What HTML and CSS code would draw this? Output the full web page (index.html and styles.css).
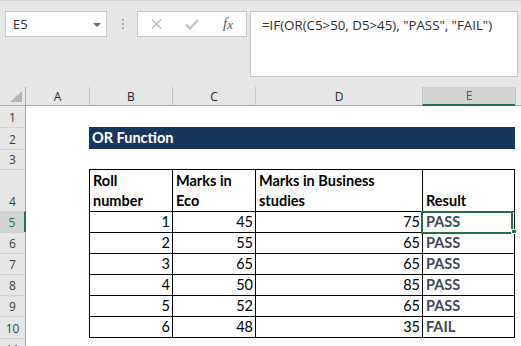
FILE: index.html
```html
<!DOCTYPE html>
<html lang="en">
<head>
<meta charset="utf-8">
<title>OR Function</title>
<link rel="stylesheet" href="styles.css">
</head>
<body>
<div class="app">
  <header class="toolbar">
    <div class="namebox">
      <span>E5</span>
      <svg class="nb-arrow" width="8" height="4" viewBox="0 0 8 4"><path d="M0 0H8L4 4Z" fill="#6a6a6a"/></svg>
    </div>
    <div class="grip"><i></i><i></i><i></i></div>
    <div class="fbuttons">
      <svg width="11" height="10" viewBox="0 0 11 10"><path d="M0.8 0.5L10.2 9.5M10.2 0.5L0.8 9.5" stroke="#b9b9b9" stroke-width="1.3" fill="none"/></svg>
      <svg width="14" height="11" viewBox="0 0 14 11"><path d="M1 5.5L5 9.5L13 1" stroke="#c2c2c2" stroke-width="2.2" fill="none"/></svg>
      <span class="fx">f<span class="fx-x">x</span></span>
    </div>
    <div class="formula">=IF(OR(C5&gt;50, D5&gt;45), "PASS", "FAIL")</div>
  </header>

  <main class="sheet">
    <div class="corner"><svg width="12" height="11" viewBox="0 0 12 11"><path d="M12 0V11H0Z" fill="#b5b5b5"/></svg></div>
    <div class="ch first">A</div>
    <div class="ch">B</div>
    <div class="ch">C</div>
    <div class="ch">D</div>
    <div class="ch active">E</div>
    <div class="ch"></div>

    <div class="rh top">1</div>
    <div class="c"></div><div class="c"></div><div class="c"></div><div class="c"></div><div class="c"></div><div class="c"></div>

    <div class="rh">2</div>
    <div class="c"></div>
    <div class="banner">OR Function</div>
    <div class="c"></div>

    <div class="rh">3</div>
    <div class="c"></div><div class="c"></div><div class="c"></div><div class="c"></div><div class="c"></div><div class="c"></div>

    <div class="rh">4</div>
    <div class="c"></div>
    <div class="t hd"><span>Roll<br>number</span></div>
    <div class="t hd"><span>Marks in<br>Eco</span></div>
    <div class="t hd"><span>Marks in Business<br>studies</span></div>
    <div class="t hd e"><span>Result</span></div>
    <div class="c"></div>

    <div class="rh active">5</div>
    <div class="c"></div>
    <div class="t num">1</div>
    <div class="t num">45</div>
    <div class="t num">75</div>
    <div class="t res e sel">PASS<div class="selbox"><i class="handle"></i></div></div>
    <div class="c"></div>

    <div class="rh">6</div>
    <div class="c"></div>
    <div class="t num">2</div>
    <div class="t num">55</div>
    <div class="t num">65</div>
    <div class="t res e">PASS</div>
    <div class="c"></div>

    <div class="rh">7</div>
    <div class="c"></div>
    <div class="t num">3</div>
    <div class="t num">65</div>
    <div class="t num">65</div>
    <div class="t res e">PASS</div>
    <div class="c"></div>

    <div class="rh">8</div>
    <div class="c"></div>
    <div class="t num">4</div>
    <div class="t num">50</div>
    <div class="t num">85</div>
    <div class="t res e">PASS</div>
    <div class="c"></div>

    <div class="rh">9</div>
    <div class="c"></div>
    <div class="t num">5</div>
    <div class="t num">52</div>
    <div class="t num">65</div>
    <div class="t res e">PASS</div>
    <div class="c"></div>

    <div class="rh">10</div>
    <div class="c"></div>
    <div class="t num last">6</div>
    <div class="t num last">48</div>
    <div class="t num last">35</div>
    <div class="t res e last">FAIL</div>
    <div class="c"></div>

    <div class="rh">11</div>
    <div class="c"></div><div class="c"></div><div class="c"></div><div class="c"></div><div class="c"></div><div class="c"></div>
  </main>
</div>
</body>
</html>
```

FILE: styles.css
```css
* { box-sizing: border-box; }

html, body {
  margin: 0;
  padding: 0;
}

body {
  width: 521px;
  height: 346px;
  overflow: hidden;
  background: #e6e6e6;
  font-family: "Open Sans", "Noto Sans", sans-serif;
}

.app {
  display: flex;
  flex-direction: column;
  height: 346px;
}

/* ---------- toolbar / formula bar ---------- */
.toolbar {
  height: 87px;
  flex: none;
  border-top: 1px solid #d6d6d6;
  display: flex;
  align-items: flex-start;
  padding: 10px 0 0 5px;
}

.namebox {
  width: 102px;
  height: 26px;
  background: #fff;
  border: 1px solid #c6c6c6;
  display: flex;
  align-items: center;
  justify-content: space-between;
  padding: 0 5px 0 7px;
  font-size: 13px;
  color: #333;
}

.nb-arrow { margin-top: 1px; }

.grip {
  width: 2px;
  margin: 8px 13px 0 15px;
  display: flex;
  flex-direction: column;
  gap: 2px;
}

.grip i {
  display: block;
  width: 2px;
  height: 2px;
  background: #a9a9a9;
}

.fbuttons {
  width: 110px;
  height: 26px;
  background: #fff;
  border: 1px solid #c6c6c6;
  display: grid;
  grid-template-columns: repeat(3, 36px);
  align-items: center;
  justify-items: center;
}

.fx {
  font-family: "Liberation Serif", "DejaVu Serif", serif;
  font-style: italic;
  font-size: 15px;
  color: #5a5a5a;
  line-height: 1;
  margin-top: -2px;
}

.fx-x {
  font-size: 13px;
  position: relative;
  top: 1px;
}

.formula {
  margin-left: 3px;
  width: 268px;
  height: 66px;
  background: #fff;
  border: 1px solid #c6c6c6;
  padding: 4px 8px 0 11px;
  font-size: 13.3px;
  line-height: 18px;
  color: #2e2e2e;
  white-space: nowrap;
}

/* ---------- sheet grid ---------- */
.sheet {
  flex: 1;
  display: grid;
  grid-template-columns: 26px 63px 83px 83px 167px 93px 1fr;
  grid-template-rows: 19px 21px 22px 20px 42px repeat(5, 21px) 22px 21px;
  background: #fff;
  font-family: "Lato", "Open Sans", sans-serif;
  font-size: 14.5px;
  color: #000;
}

.corner {
  background: #e6e6e6;
  border-right: 1px solid #ababab;
  border-bottom: 1px solid #ababab;
  display: flex;
  justify-content: flex-end;
  align-items: flex-end;
  padding: 0 3px 3px 0;
}

.ch {
  background: #e6e6e6;
  border-bottom: 1px solid #ababab;
  border-left: 1px solid #c4c4c4;
  display: flex;
  align-items: center;
  justify-content: center;
  font-family: "Open Sans", sans-serif;
  font-size: 12px;
  color: #262626;
}

.ch.first { border-left: none; }

.ch.active {
  background: #d3d3d3;
  color: #217346;
  border-bottom: 2px solid #217346;
}

.rh {
  background: #e6e6e6;
  border-right: 1px solid #ababab;
  border-top: 1px solid #d2d2d2;
  display: flex;
  align-items: flex-end;
  justify-content: center;
  font-family: "Open Sans", sans-serif;
  font-size: 12px;
  line-height: 18px;
  color: #3a3a3a;
}

.rh.top { border-top: none; }

.rh.active {
  background: #d3d3d3;
  color: #217346;
  border-right: 2px solid #217346;
}

.c { background: #fff; }

.banner {
  grid-column: span 4;
  background: #17375e;
  color: #fff;
  font-weight: 700;
  display: flex;
  align-items: center;
  padding-left: 3px;
  line-height: 20px;
}

.t {
  border-left: 1px solid #000;
  border-top: 1px solid #000;
  display: flex;
  align-items: flex-end;
  padding: 0 2px 0 3px;
  line-height: 20px;
  white-space: nowrap;
}

.t.e { border-right: 1px solid #000; }
.t.last { border-bottom: 1px solid #000; }

.hd { font-weight: 700; }

.num { justify-content: flex-end; }

.res {
  font-weight: 700;
  color: #404856;
}

.sel { position: relative; }

.selbox {
  position: absolute;
  left: -2px;
  top: -1px;
  width: 92px;
  height: 23px;
  border: 2px solid #217346;
}

.handle {
  position: absolute;
  right: -6px;
  bottom: -2px;
  width: 6px;
  height: 5px;
  background: #217346;
  border: 1px solid #fff;
}
```
